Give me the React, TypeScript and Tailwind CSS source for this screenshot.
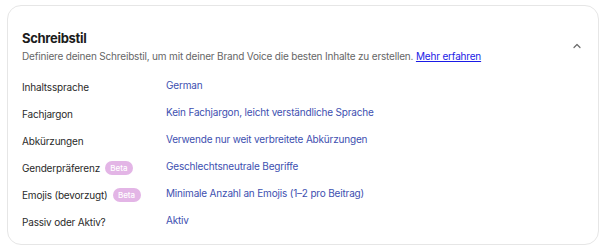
const rows = [
  { label: "Inhaltssprache", value: "German", beta: false },
  { label: "Fachjargon", value: "Kein Fachjargon, leicht verständliche Sprache", beta: false },
  { label: "Abkürzungen", value: "Verwende nur weit verbreitete Abkürzungen", beta: false },
  { label: "Genderpräferenz", value: "Geschlechtsneutrale Begriffe", beta: true },
  { label: "Emojis (bevorzugt)", value: "Minimale Anzahl an Emojis (1–2 pro Beitrag)", beta: true },
  { label: "Passiv oder Aktiv?", value: "Aktiv", beta: false },
];

const App = () => {
  return (
    <div className="min-h-screen bg-white px-[7px] pt-[5px] font-['Inter',sans-serif]">
      <div className="h-[240px] rounded-[14px] border border-[#e6e6e6] pl-[14px] pr-[16px] pt-[24px]">
        <div className="flex items-start justify-between">
          <div>
            <h2 className="text-[13px] font-bold leading-[17px] tracking-[-0.3px] text-[#1c1c1c]">Schreibstil</h2>
            <p className="mt-[1px] text-[10px] leading-[16px] tracking-[-0.18px] text-[#666666]">
              Definiere deinen Schreibstil, um mit deiner Brand Voice die besten Inhalte zu erstellen.{" "}
              <a href="#" className="text-[#1a1ae6] underline">Mehr erfahren</a>
            </p>
          </div>
          <svg width="10" height="10" viewBox="0 0 10 10" className="mt-[11px]">
            <path d="M2 6.5 L5 3.5 L8 6.5" fill="none" stroke="#6b6b6b" strokeWidth="1.2" strokeLinecap="round" strokeLinejoin="round" />
          </svg>
        </div>
        <div className="mt-[8px] flex flex-col">
          {rows.map((r) => (
            <div key={r.label} className="flex h-[27px] items-center text-[10px] tracking-[-0.18px]">
              <div className="flex w-[144px] items-center gap-[5px] pt-[3px] text-[#2a2a2a]">
                <span>{r.label}</span>
                {r.beta && (
                  <span className="flex h-[14px] w-[28px] items-center justify-center rounded-full bg-[#e3b5e6] text-[8px] font-medium tracking-normal text-white">
                    Beta
                  </span>
                )}
              </div>
              <div className="text-[#3d4fb0]">{r.value}</div>
            </div>
          ))}
        </div>
      </div>
    </div>
  );
};

export default App;
